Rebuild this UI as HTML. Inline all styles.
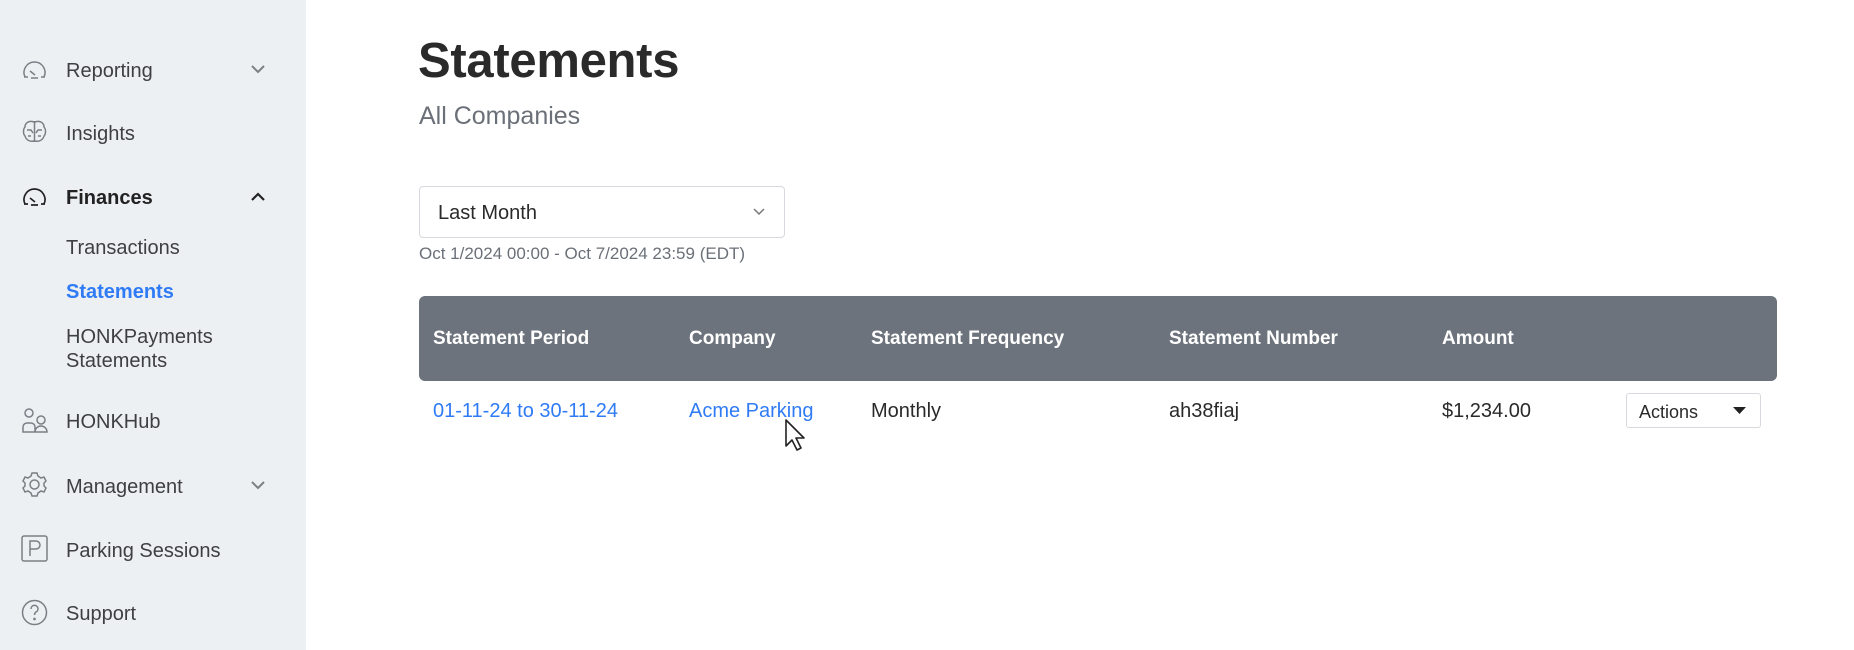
<!DOCTYPE html>
<html><head><meta charset="utf-8"><style>
*{margin:0;padding:0;box-sizing:border-box}
body{width:1854px;height:650px;overflow:hidden;background:#fff;font-family:"Liberation Sans",Arial,sans-serif;position:relative;color:#2b2b2b}
.sb{position:absolute;left:0;top:0;width:306px;height:650px;background:#edf0f3}
.it{position:absolute;left:66px;font-size:20px;color:#3d3f42;line-height:24px}
.ic{position:absolute;left:21px;width:27px;height:27px}
.chev{position:absolute;left:250px;width:16px;height:10px}
.a{position:absolute;white-space:nowrap}
</style></head><body>
<div class="sb">
<svg class="ic" style="top:55px" viewBox="0 0 27 27" fill="none" stroke="#7b7f85" stroke-width="1.5"><path d="M4 22A10.5 10.5 0 1 1 23 22"/><path d="M3 22h4M20 22h4M10 23h7M14 20l-5-4"/></svg>
<div class="it" style="top:59px">Reporting</div>
<svg class="chev" style="top:64px" viewBox="0 0 16 10" fill="none" stroke="#7b7f85" stroke-width="2"><path d="M2 2l6 6 6-6"/></svg>
<svg class="ic" style="top:118px" viewBox="0 0 27 27" fill="none" stroke="#7b7f85" stroke-width="1.5"><path d="M13.5 3v21M13 4C8 2 4 5 4 9c-2 2-2 7 0 9 1 4 5 6 9 5M14 4c5-2 9 1 9 5 2 2 2 7 0 9-1 4-5 6-9 5M6 12h4l2 3M21 12h-4l-2 3M7 18h3M20 18h-3"/></svg>
<div class="it" style="top:122px">Insights</div>
<svg class="ic" style="top:182px" viewBox="0 0 27 27" fill="none" stroke="#222" stroke-width="1.7"><path d="M4 22A10.5 10.5 0 1 1 23 22"/><path d="M3 22h4M20 22h4M10 23h7M14 20l-5-4"/></svg>
<div class="it" style="top:186px;font-weight:bold;color:#222">Finances</div>
<svg class="chev" style="top:192px" viewBox="0 0 16 10" fill="none" stroke="#222" stroke-width="2.2"><path d="M2 8l6-6 6 6"/></svg>
<div class="it" style="top:236px">Transactions</div>
<div class="it" style="top:280px;font-weight:bold;color:#2f7bf5">Statements</div>
<div class="it" style="top:325px">HONKPayments</div>
<div class="it" style="top:349px">Statements</div>
<svg class="ic" style="top:407px" viewBox="0 0 27 27" fill="none" stroke="#7b7f85" stroke-width="1.5"><circle cx="8" cy="6" r="4"/><path d="M2 25v-5a4 4 0 0 1 4-4h4a4 4 0 0 1 4 4v5zM14 25a6 6 0 0 1 12 0z"/><circle cx="20" cy="13" r="4"/></svg>
<div class="it" style="top:410px">HONKHub</div>
<svg class="ic" style="top:471px" viewBox="0 0 27 27" fill="none" stroke="#7b7f85" stroke-width="1.5"><circle cx="13.5" cy="13.5" r="4.5"/><path d="M11 2h5l1 3 3 2 3-1 2 4-2 2v3l2 2-2 4-3-1-3 2-1 3h-5l-1-3-3-2-3 1-2-4 2-2v-3l-2-2 2-4 3 1 3-2z"/></svg>
<div class="it" style="top:475px">Management</div>
<svg class="chev" style="top:480px" viewBox="0 0 16 10" fill="none" stroke="#7b7f85" stroke-width="2"><path d="M2 2l6 6 6-6"/></svg>
<svg class="ic" style="top:535px" viewBox="0 0 27 27" fill="none" stroke="#7b7f85" stroke-width="1.5"><rect x="1" y="1" width="25" height="25" rx="2"/><path d="M9 21V6h6a4 4 0 0 1 0 8H9"/></svg>
<div class="it" style="top:539px">Parking Sessions</div>
<svg class="ic" style="top:599px" viewBox="0 0 27 27" fill="none" stroke="#7b7f85" stroke-width="1.5"><circle cx="13.5" cy="13.5" r="12"/><path d="M10 10a3.5 3.5 0 1 1 5 3c-1 .6-1.5 1.4-1.5 3"/><circle cx="13.5" cy="20" r=".6" fill="#7b7f85"/></svg>
<div class="it" style="top:602px">Support</div>
</div>

<div class="a" style="left:418px;top:33px;font-size:49px;font-weight:bold;color:#2a2a2a;letter-spacing:-0.3px">Statements</div>
<div class="a" style="left:419px;top:102px;font-size:25px;color:#6b7078">All Companies</div>
<div class="a" style="left:419px;top:186px;width:366px;height:52px;border:1px solid #d6d9dd;border-radius:4px"></div>
<div class="a" style="left:438px;top:202px;font-size:20px;color:#2a2a2a">Last Month</div>
<svg class="a" style="left:753px;top:208px" width="12" height="8" viewBox="0 0 12 8" fill="none" stroke="#777" stroke-width="1.5"><path d="M1 1l5 5 5-5"/></svg>
<div class="a" style="left:419px;top:244px;font-size:17px;color:#6b7078">Oct 1/2024 00:00 - Oct 7/2024 23:59 (EDT)</div>

<div class="a" style="left:419px;top:296px;width:1358px;height:85px;background:#6c737c;border-radius:6px"></div>
<div class="a" style="top:328px;left:433px;font-size:19px;font-weight:bold;color:#fff">Statement Period</div>
<div class="a" style="top:328px;left:689px;font-size:19px;font-weight:bold;color:#fff">Company</div>
<div class="a" style="top:328px;left:871px;font-size:19px;font-weight:bold;color:#fff">Statement Frequency</div>
<div class="a" style="top:328px;left:1169px;font-size:19px;font-weight:bold;color:#fff">Statement Number</div>
<div class="a" style="top:328px;left:1442px;font-size:19px;font-weight:bold;color:#fff">Amount</div>

<div class="a" style="top:400px;left:433px;font-size:20px;color:#2f7bf5">01-11-24 to 30-11-24</div>
<div class="a" style="top:400px;left:689px;font-size:20px;color:#2f7bf5">Acme Parking</div>
<div class="a" style="top:400px;left:871px;font-size:20px;color:#2a2a2a">Monthly</div>
<div class="a" style="top:400px;left:1169px;font-size:20px;color:#2a2a2a">ah38fiaj</div>
<div class="a" style="top:400px;left:1442px;font-size:20px;color:#2a2a2a">$1,234.00</div>
<div class="a" style="left:1626px;top:393px;width:135px;height:35px;border:1px solid #d6d9dd;border-radius:3px"></div>
<div class="a" style="left:1639px;top:402px;font-size:18px;color:#2a2a2a">Actions</div>
<svg class="a" style="left:1733px;top:407px" width="13" height="8" viewBox="0 0 13 8"><path d="M0 0h13L6.5 7z" fill="#222"/></svg>
<svg class="a" style="left:784px;top:418px" width="28" height="36" viewBox="0 0 28 36"><path d="M2 2v26l6-6 5 10 4-2-5-10h8z" fill="#fff" stroke="#222" stroke-width="1.6" stroke-linejoin="round"/></svg>
</body></html>
